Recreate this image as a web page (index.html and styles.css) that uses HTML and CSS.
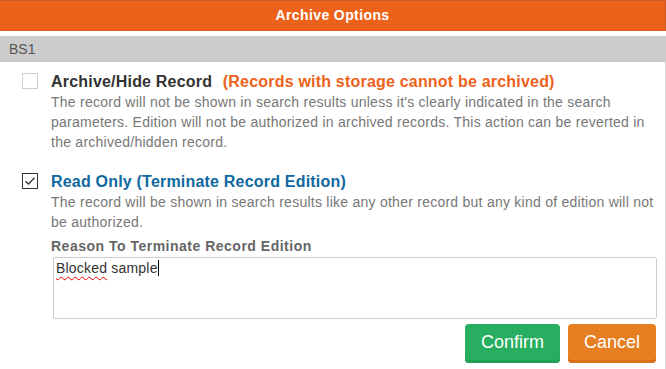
FILE: index.html
```html
<!DOCTYPE html>
<html>
<head>
<meta charset="utf-8">
<link rel="stylesheet" href="styles.css">
</head>
<body>
<div class="modal">
  <div class="modal-header">Archive Options</div>
  <div class="modal-body">
    <div class="record-bar">BS1</div>
    <div class="options">
      <div class="option">
        <span class="checkbox"></span>
        <div class="option-text">
          <div class="option-title">Archive/Hide Record <span class="warn">(Records with storage cannot be archived)</span></div>
          <div class="option-desc">The record will not be shown in search results unless it's clearly indicated in the search parameters. Edition will not be authorized in archived records. This action can be reverted in the archived/hidden record.</div>
        </div>
      </div>
      <div class="option">
        <span class="checkbox checked"><svg width="14" height="14" viewBox="0 0 14 14"><path d="M2.5 7.2 L5.6 10 L11.5 3.6" fill="none" stroke="#333" stroke-width="1.4"/></svg></span>
        <div class="option-text">
          <div class="option-title blue">Read Only (Terminate Record Edition)</div>
          <div class="option-desc">The record will be shown in search results like any other record but any kind of edition will not be authorized.</div>
          <div class="field-label">Reason To Terminate Record Edition</div>
          <div class="textarea"><span class="misspelled">Blocked</span> sample<span class="caret"></span></div>
        </div>
      </div>
    </div>
    <div class="actions">
      <button class="btn btn-confirm">Confirm</button>
      <button class="btn btn-cancel">Cancel</button>
    </div>
  </div>
</div>
</body>
</html>
```
FILE: styles.css
```css
* { box-sizing: border-box; }
html, body { margin: 0; padding: 0; background: #fff; }
body { font-family: "Liberation Sans", Arial, sans-serif; width: 666px; height: 369px; overflow: hidden; }

.modal { width: 666px; }

.modal-header {
  height: 31px;
  background: #ec621a;
  border-top: 1px solid #cc5a22;
  border-right: 1px solid #cc5a22;
  border-bottom: 1px solid #d95c1e;
  color: #fff;
  font-weight: bold;
  font-size: 14px;
  letter-spacing: 0.4px;
  line-height: 29px;
  text-align: center;
}

.modal-body {
  margin-top: 5px;
  border-right: 1px solid #d4d4d4;
  height: 333px;
}

.record-bar {
  height: 26px;
  background: #cccccc;
  color: #555;
  font-size: 14px;
  line-height: 26px;
  padding-left: 9px;
  margin-right: -1px;
}

.options { padding: 10px 0 0 22px; }

.option { display: flex; align-items: flex-start; margin-bottom: 20px; }
.option:last-child { margin-bottom: 0; }

.checkbox {
  flex: none;
  width: 16px;
  height: 16px;
  border: 1px solid #cfcfcf;
  margin-top: 1px;
  margin-right: 13px;
  display: flex;
  align-items: center;
  justify-content: center;
  background: #fff;
}
.checkbox.checked { border-color: #333; }

.option-text { flex: 1; padding-right: 2px; }

.option-title {
  font-size: 16px;
  font-weight: bold;
  line-height: 20px;
  letter-spacing: 0.2px;
  color: #333;
}
.option-title.blue { color: #0f68a0; }
.warn { color: #ec621a; margin-left: 6px; }

.option-desc {
  font-size: 14px;
  line-height: 20px;
  letter-spacing: 0.25px;
  color: #777;
}

.field-label {
  margin-top: 4px;
  font-size: 14px;
  font-weight: bold;
  line-height: 20px;
  letter-spacing: 0.5px;
  color: #666;
}

.textarea {
  margin-top: 1px;
  margin-left: 2px;
  margin-right: 6px;
  height: 62px;
  border: 1px solid #cccccc;
  border-radius: 2px;
  padding: 0 2px;
  font-size: 14px;
  line-height: 20px;
  letter-spacing: 0.2px;
  color: #333;
}
.misspelled { text-decoration: underline wavy #e00; text-decoration-thickness: 1px; text-underline-offset: 3px; }
.caret { display: inline-block; width: 1px; height: 16px; background: #000; vertical-align: -3px; }

.actions {
  display: flex;
  justify-content: flex-end;
  gap: 8px;
  margin-top: 5px;
  padding-right: 9px;
}

.btn {
  border: none;
  border-radius: 4px;
  color: #fff;
  font-family: "Liberation Sans", Arial, sans-serif;
  font-size: 18px;
  height: 39px;
  padding: 0 15px 2px;
  cursor: pointer;
}
.btn-confirm { width: 95px; background: #27ae60; box-shadow: inset 0 -3px 0 #22a055; }
.btn-cancel { width: 88px; background: #e67e22; box-shadow: inset 0 -3px 0 #d8731b; }
```
